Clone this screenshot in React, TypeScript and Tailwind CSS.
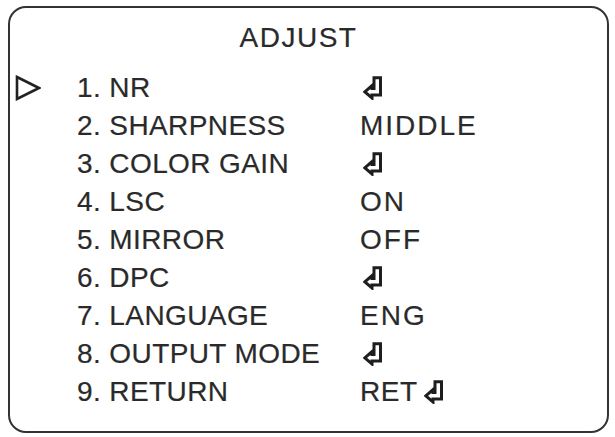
import React from "react";

type Item = { label: string; value?: string; enter?: boolean };

const items: Item[] = [
  { label: "1. NR", enter: true },
  { label: "2. SHARPNESS", value: "MIDDLE" },
  { label: "3. COLOR GAIN", enter: true },
  { label: "4. LSC", value: "ON" },
  { label: "5. MIRROR", value: "OFF" },
  { label: "6. DPC", enter: true },
  { label: "7. LANGUAGE", value: "ENG" },
  { label: "8. OUTPUT MODE", enter: true },
  { label: "9. RETURN", value: "RET", enter: true },
];

// hollow "enter" hook arrow used for sub-menus
function EnterIcon() {
  return (
    <svg width="20" height="24" viewBox="0 0 20 24" className="shrink-0">
      <polygon
        points="11,1.8 17.5,1.8 17.5,19 9,19 9,22 1.8,15.8 9,9.5 9,12.6 11,12.6"
        fill="white"
        stroke="#1e1e1e"
        strokeWidth="3"
        strokeLinejoin="miter"
      />
    </svg>
  );
}

function Cursor() {
  return (
    <svg width="26" height="26" viewBox="0 0 26 26">
      <polygon
        points="2,2 24,13 2,24"
        fill="none"
        stroke="#222"
        strokeWidth="2.6"
        strokeLinejoin="miter"
      />
    </svg>
  );
}

export default function App() {
  return (
    <div className="w-[615px] h-[437px] bg-white pt-[6px] pl-[8px]">
      <div
        className="w-[601px] h-[427px] border-[2.5px] border-[#333] rounded-[18px] pt-[11px] text-[28px] text-[#2a2a2a] [-webkit-text-stroke:0.2px_#2a2a2a]"
        style={{ fontFamily: '"Liberation Sans", Arial, sans-serif' }}
      >
        <div className="h-[38px] leading-[38px] text-center tracking-[1.5px] pr-[20px]">
          ADJUST
        </div>
        <div className="mt-[12px] flex flex-col">
          {items.map((it, i) => (
            <div key={it.label} className="flex items-center h-[38px] leading-[38px]">
              <div className="w-[67px] pl-[5px] flex items-center">
                {i === 0 && <Cursor />}
              </div>
              <div className="w-[283px] whitespace-nowrap tracking-[0.4px]">{it.label}</div>
              <div className="flex items-center gap-[6px] whitespace-nowrap">
                {it.value && (
                  <span className={it.enter ? "tracking-[0.5px]" : "tracking-[2px]"}>
                    {it.value}
                  </span>
                )}
                {it.enter && (
                  <span className={it.value ? "" : "pl-[3px]"}>
                    <EnterIcon />
                  </span>
                )}
              </div>
            </div>
          ))}
        </div>
      </div>
    </div>
  );
}
